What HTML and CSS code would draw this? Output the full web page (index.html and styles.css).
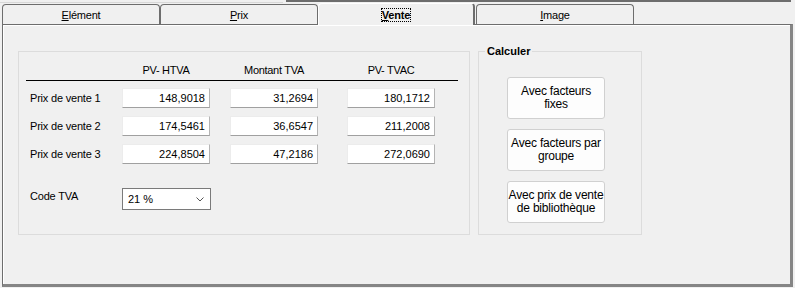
FILE: index.html
```html
<!DOCTYPE html>
<html lang="fr">
<head>
  <meta charset="UTF-8">
  <title>Vente</title>
  <link rel="stylesheet" href="styles.css">
</head>
<body>

<div class="strip">
  <div class="strip-left"></div>
  <div class="strip-right"></div>
</div>

<div class="tabs">
  <div class="tab"><span class="key">E</span>lément</div>
  <div class="tab"><span class="key">P</span>rix</div>
  <div class="tab active"><span class="focus"><span class="key">V</span>ente</span></div>
  <div class="tab last"><span class="key">I</span>mage</div>
</div>

<div class="panel">
  <div class="group prices">
    <div class="grid head">
      <div></div>
      <div class="col">PV- HTVA</div>
      <div class="col">Montant TVA</div>
      <div class="col">PV- TVAC</div>
    </div>

    <div class="rows">
      <div class="grid row">
        <div class="label">Prix de vente 1</div>
        <div class="field">148,9018</div>
        <div class="field">31,2694</div>
        <div class="field">180,1712</div>
      </div>
      <div class="grid row">
        <div class="label">Prix de vente 2</div>
        <div class="field">174,5461</div>
        <div class="field">36,6547</div>
        <div class="field">211,2008</div>
      </div>
      <div class="grid row">
        <div class="label">Prix de vente 3</div>
        <div class="field">224,8504</div>
        <div class="field">47,2186</div>
        <div class="field">272,0690</div>
      </div>
    </div>

    <div class="grid code">
      <div class="label">Code TVA</div>
      <div class="select">
        <span>21 %</span>
        <svg width="8" height="5" viewBox="0 0 8 5"><path d="M0.5 0.5 L4 4 L7.5 0.5" fill="none" stroke="#555" stroke-width="1"/></svg>
      </div>
    </div>
  </div>

  <fieldset class="group calc">
    <legend>Calculer</legend>
    <div class="buttons">
      <button class="btn">Avec facteurs<br>fixes</button>
      <button class="btn">Avec facteurs par<br>groupe</button>
      <button class="btn">Avec prix de vente<br>de bibliothèque</button>
    </div>
  </fieldset>
</div>

</body>
</html>
```

FILE: styles.css
```css
body {
  margin: 0;
  width: 795px;
  height: 288px;
  background: #f0f0f0;
  font-family: "Liberation Sans", Arial, sans-serif;
  font-size: 11px;
  color: #000;
  overflow: hidden;
}

/* top strip */
.strip {
  display: flex;
  height: 3px;
}

.strip-left {
  width: 283px;
  height: 2px;
  border-bottom: 1px solid #d8d8d8;
}

.strip-right {
  width: 505px;
  height: 2px;
  margin-left: 3px;
  background: #6d6d6d;
}

/* tabs */
.tabs {
  display: flex;
  align-items: flex-end;
  height: 21px;
  margin-left: 2px;
}

.tab {
  box-sizing: border-box;
  width: 158px;
  height: 20px;
  padding-top: 3px;
  line-height: 14px;
  text-align: center;
  letter-spacing: -0.2px;
  border: 1px solid #6d6d6d;
  border-bottom: none;
  border-radius: 4px 4px 0 0;
  background: #f0f0f0;
}

.tab.active {
  position: relative;
  z-index: 1;
  width: 157px;
  height: 22px;
  margin-bottom: -1px;
  padding-top: 4px;
  font-weight: bold;
  border-left-color: #fff;
  border-top-color: #fff;
  border-right: 2px solid #6d6d6d;
}

.tab.last {
  margin-left: 1px;
}

.key {
  text-decoration: underline;
}

.focus {
  outline: 1px dotted #000;
  outline-offset: 0;
}

/* panel */
.panel {
  box-sizing: border-box;
  display: flex;
  align-items: flex-start;
  gap: 8px;
  width: 791px;
  height: 263px;
  margin-left: 2px;
  padding: 26px 0 0 15px;
  border: 1px solid #6d6d6d;
  border-right: 3px solid #858585;
  border-bottom: 3px solid #858585;
  box-shadow: inset 1px 1px 0 #fff;
}

.group {
  box-sizing: border-box;
  border: 1px solid #dcdcdc;
  margin: 0;
}

.prices {
  width: 452px;
  height: 184px;
  padding: 0 11px 0 7px;
}

.grid {
  display: grid;
  grid-template-columns: 96px 108px 117px 88px;
}

.head {
  padding: 11px 0 3px;
  line-height: 14px;
  border-bottom: 1px solid #000;
}

.col {
  width: 88px;
  text-align: center;
  letter-spacing: -0.3px;
}

.rows {
  display: grid;
  row-gap: 8px;
  margin-top: 7px;
}

.row {
  align-items: center;
  height: 20px;
}

.label {
  padding-left: 4px;
  letter-spacing: -0.2px;
}

.field {
  box-sizing: border-box;
  width: 88px;
  height: 20px;
  padding-right: 4px;
  line-height: 19px;
  text-align: right;
  background: #fff;
  border-top: 1px solid #ececec;
  border-left: 1px solid #ececec;
  border-right: 1px solid #b4b4b4;
  border-bottom: 1px solid #a0a0a0;
}

.row .field:first-of-type {
  width: 89px;
}

.code {
  margin-top: 24px;
}

.code .label {
  padding-top: 2px;
}

.select {
  box-sizing: border-box;
  display: flex;
  align-items: center;
  justify-content: space-between;
  width: 89px;
  height: 22px;
  padding: 0 6px 0 5px;
  background: #fff;
  border: 1px solid #7a7a7a;
}

/* calculer */
.calc {
  width: 164px;
  height: 191px;
  margin-top: -7px;
  padding: 0;
}

.calc legend {
  margin-left: 6px;
  padding: 0 2px;
  line-height: 14px;
  font-weight: bold;
}

.buttons {
  display: flex;
  flex-direction: column;
  gap: 10px;
  padding: 19px 0 0 28px;
}

.btn {
  box-sizing: border-box;
  width: 98px;
  height: 42px;
  padding: 0;
  font-family: inherit;
  font-size: 12px;
  line-height: 13px;
  letter-spacing: -0.2px;
  color: #000;
  background: #fdfdfd;
  border: 1px solid #d0d0d0;
  border-radius: 3px;
}
```
